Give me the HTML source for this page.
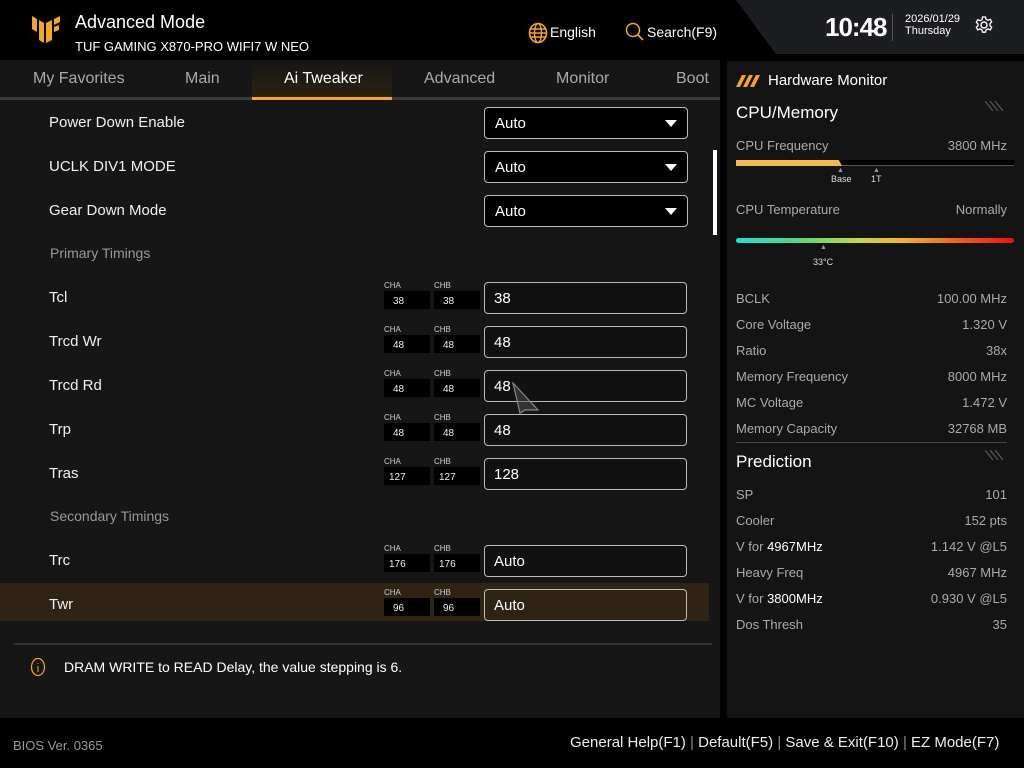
<!DOCTYPE html><html><head><meta charset="utf-8"><style>
*{margin:0;padding:0;box-sizing:border-box}
body{width:1024px;height:768px;background:#000;font-family:"Liberation Sans",sans-serif;color:#fff;position:relative;overflow:hidden}
.a{position:absolute;white-space:nowrap}
.lbl{font-size:15px;color:#f0f0f0}
.dd{position:absolute;left:484px;width:204px;height:32px;border:1px solid #bbb;border-radius:4px;background:#000;font-size:15px;padding:7px 0 0 10px}
.dd:after{content:"";position:absolute;right:10px;top:12px;border-left:6px solid transparent;border-right:6px solid transparent;border-top:7px solid #fff}
.in{position:absolute;left:484px;width:203px;height:32px;border:1px solid #bbb;border-radius:4px;background:#111;font-size:15px;padding:7px 0 0 9px}
.ch{position:absolute;font-size:8px;color:#ccc}
.cb{position:absolute;width:46px;height:18px;background:#000;font-size:10px;color:#eee;padding:5px 0 0 9px}
.hm{font-size:13px;color:#aaa}
.hv{position:absolute;right:17px;font-size:13px;color:#aaa}
</style></head><body>
<!-- top bar -->
<svg class="a" style="left:31px;top:14px" width="30" height="30" viewBox="0 0 30 30"><path d="M1 2l5 3v13l-5-3zM8 6l5 3v20l-5-3zM15 9l6-3v20l-6 3zM23 5l6-3v6l-6 3zM23 13l5-2v5l-5 2z" fill="#f5a623"/></svg>
<div class="a" style="left:75px;top:12px;font-size:18px">Advanced Mode</div>
<div class="a" style="left:75px;top:39px;font-size:13px">TUF GAMING X870-PRO WIFI7 W NEO</div>
<svg class="a" style="left:528px;top:22px" width="20" height="22" viewBox="0 0 20 22"><ellipse cx="10" cy="11" rx="8.5" ry="9.5" fill="none" stroke="#f5a623" stroke-width="1.6"/><ellipse cx="10" cy="11" rx="3.5" ry="9.5" fill="none" stroke="#f5a623" stroke-width="1.4"/><path d="M2 7h16M1.5 11h17M2 15h16" stroke="#f5a623" stroke-width="1.4"/></svg>
<div class="a" style="left:550px;top:24px;font-size:14px">English</div>
<svg class="a" style="left:625px;top:22px" width="20" height="20"><circle cx="8" cy="8" r="6.5" fill="none" stroke="#f5a623" stroke-width="1.5"/><path d="M13 13l5 5" stroke="#f5a623" stroke-width="1.6"/></svg>
<div class="a" style="left:647px;top:24px;font-size:14px">Search(F9)</div>
<svg class="a" style="left:736px;top:0" width="288" height="54"><path d="M0 0H288V54H40Z" fill="#1c1d21"/></svg>
<div class="a" style="left:825px;top:12px;font-size:26px;font-weight:bold;letter-spacing:-1px">10:48</div>
<div class="a" style="left:892px;top:14px;width:1px;height:27px;background:#555"></div>
<div class="a" style="left:905px;top:13px;font-size:11px;line-height:12px">2026/01/29<br>Thursday</div>
<svg class="a" style="left:974px;top:15px" width="20" height="20" viewBox="0 0 20 20"><circle cx="10" cy="10" r="3" fill="none" stroke="#fff" stroke-width="1.4"/><path d="M8.5 2h3l.5 2.3 2 1 2.2-1 1.5 2.6-1.7 1.6v2.2l1.7 1.6-1.5 2.6-2.2-1-2 1-.5 2.3h-3l-.5-2.3-2-1-2.2 1-1.5-2.6 1.7-1.6V8.9L2.3 7.3 3.8 4.7l2.2 1 2-1z" fill="none" stroke="#fff" stroke-width="1.3"/></svg>
<!-- main panel -->
<div class="a" style="left:0;top:60px;width:720px;height:658px;background:#161616"></div>
<div class="a" style="left:0;top:97px;width:720px;height:3px;background:#3a3a3a"></div>
<div class="a" style="left:252px;top:60px;width:140px;height:40px;background:linear-gradient(#161616,#2c2212)"></div>
<div class="a" style="left:252px;top:97px;width:140px;height:3px;background:#f5a623"></div>
<div class="a" style="left:33px;top:70px;font-size:16px;color:#aaa">My Favorites</div>
<div class="a" style="left:185px;top:70px;font-size:16px;color:#aaa">Main</div>
<div class="a" style="left:284px;top:70px;font-size:16px;color:#fff">Ai Tweaker</div>
<div class="a" style="left:424px;top:70px;font-size:16px;color:#aaa">Advanced</div>
<div class="a" style="left:556px;top:70px;font-size:16px;color:#aaa">Monitor</div>
<div class="a" style="left:676px;top:70px;font-size:16px;color:#aaa">Boot</div>
<div class="a" style="left:713px;top:150px;width:4px;height:85px;background:#fff"></div>
<div class="a" style="left:0;top:583px;width:709px;height:38px;background:#2f2313"></div>

<div class="a lbl" style="left:49px;top:114px">Power Down Enable</div><div class="dd" style="top:107px">Auto</div>
<div class="a lbl" style="left:49px;top:158px">UCLK DIV1 MODE</div><div class="dd" style="top:151px">Auto</div>
<div class="a lbl" style="left:49px;top:202px">Gear Down Mode</div><div class="dd" style="top:195px">Auto</div>
<div class="a" style="left:50px;top:245px;font-size:14px;color:#999">Primary Timings</div>
<div class="a" style="left:50px;top:508px;font-size:14px;color:#999">Secondary Timings</div>

<div class="a lbl" style="left:49px;top:289px">Tcl</div>
<div class="ch" style="left:384px;top:281px">CHA</div><div class="ch" style="left:434px;top:281px">CHB</div>
<div class="cb" style="left:384px;top:291px">38</div><div class="cb" style="left:434px;top:291px">38</div>
<div class="in" style="top:282px">38</div>

<div class="a lbl" style="left:49px;top:333px">Trcd Wr</div>
<div class="ch" style="left:384px;top:325px">CHA</div><div class="ch" style="left:434px;top:325px">CHB</div>
<div class="cb" style="left:384px;top:335px">48</div><div class="cb" style="left:434px;top:335px">48</div>
<div class="in" style="top:326px">48</div>

<div class="a lbl" style="left:49px;top:377px">Trcd Rd</div>
<div class="ch" style="left:384px;top:369px">CHA</div><div class="ch" style="left:434px;top:369px">CHB</div>
<div class="cb" style="left:384px;top:379px">48</div><div class="cb" style="left:434px;top:379px">48</div>
<div class="in" style="top:370px">48</div>

<div class="a lbl" style="left:49px;top:421px">Trp</div>
<div class="ch" style="left:384px;top:413px">CHA</div><div class="ch" style="left:434px;top:413px">CHB</div>
<div class="cb" style="left:384px;top:423px">48</div><div class="cb" style="left:434px;top:423px">48</div>
<div class="in" style="top:414px">48</div>

<div class="a lbl" style="left:49px;top:465px">Tras</div>
<div class="ch" style="left:384px;top:457px">CHA</div><div class="ch" style="left:434px;top:457px">CHB</div>
<div class="cb" style="left:384px;top:467px;padding-left:5px">127</div><div class="cb" style="left:434px;top:467px;padding-left:5px">127</div>
<div class="in" style="top:458px">128</div>

<div class="a lbl" style="left:49px;top:552px">Trc</div>
<div class="ch" style="left:384px;top:544px">CHA</div><div class="ch" style="left:434px;top:544px">CHB</div>
<div class="cb" style="left:384px;top:554px;padding-left:5px">176</div><div class="cb" style="left:434px;top:554px;padding-left:5px">176</div>
<div class="in" style="top:545px">Auto</div>

<div class="a lbl" style="left:49px;top:596px">Twr</div>
<div class="ch" style="left:384px;top:588px">CHA</div><div class="ch" style="left:434px;top:588px">CHB</div>
<div class="cb" style="left:384px;top:598px">96</div><div class="cb" style="left:434px;top:598px">96</div>
<div class="in" style="top:589px;background:#2f2313">Auto</div>

<svg class="a" style="left:512px;top:382px" width="28" height="32"><path d="M1 1L26 28H13L8 31Z" fill="rgba(80,80,80,.5)" stroke="#888" stroke-width="1.2"/></svg>

<div class="a" style="left:14px;top:643px;width:698px;height:2px;background:#333"></div>
<svg class="a" style="left:30px;top:657px" width="16" height="20"><ellipse cx="8" cy="10" rx="6.5" ry="8.5" fill="none" stroke="#f5a623" stroke-width="1.2"/><path d="M8 6v1M8 9v6" stroke="#f5a623" stroke-width="1"/></svg>
<div class="a" style="left:64px;top:659px;font-size:14px">DRAM WRITE to READ Delay, the value stepping is 6.</div>

<!-- right panel -->
<div class="a" style="left:727px;top:61px;width:297px;height:657px;background:#141414"></div>
<svg class="a" style="left:736px;top:75px" width="24" height="12"><path d="M0 12L6 0h4L4 12zM7 12L13 0h4L11 12zM14 12L20 0h4L18 12z" fill="#f5a623"/></svg>
<div class="a" style="left:768px;top:72px;font-size:15px">Hardware Monitor</div>
<div class="a" style="left:736px;top:103px;font-size:17px">CPU/Memory</div>
<svg class="a" style="left:985px;top:101px" width="20" height="10"><path d="M0 0l8 10M5 0l8 10M10 0l8 10" stroke="#555" stroke-width="1.3"/></svg>
<div class="a hm" style="left:736px;top:138px">CPU Frequency</div><div class="hv" style="top:138px">3800 MHz</div>
<div class="a" style="left:736px;top:160px;width:278px;height:6px;background:#000;border-bottom:1px solid #555"></div>
<div class="a" style="left:736px;top:160px;width:106px;height:6px;background:#f9b84a;clip-path:polygon(0 0,97% 0,100% 100%,0 100%)"></div>
<div class="a" style="left:837px;top:167px;font-size:7px;color:#999">▲</div>
<div class="a" style="left:873px;top:167px;font-size:7px;color:#999">▲</div>
<div class="a" style="left:831px;top:174px;font-size:9px;color:#ddd">Base</div>
<div class="a" style="left:871px;top:174px;font-size:9px;color:#ddd">1T</div>
<div class="a hm" style="left:736px;top:202px">CPU Temperature</div><div class="hv" style="top:202px">Normally</div>
<div class="a" style="left:736px;top:238px;width:278px;height:5px;border-radius:3px;background:linear-gradient(90deg,#19e6d0,#4fd58a 20%,#c8d83a 45%,#f5b51e 60%,#f06a14 78%,#f01010)"></div>
<div class="a" style="left:820px;top:244px;font-size:7px;color:#999">▲</div>
<div class="a" style="left:813px;top:257px;font-size:9px;color:#ddd">33°C</div>

<div class="a hm" style="left:736px;top:291px">BCLK</div><div class="hv" style="top:291px">100.00 MHz</div>
<div class="a hm" style="left:736px;top:317px">Core Voltage</div><div class="hv" style="top:317px">1.320 V</div>
<div class="a hm" style="left:736px;top:343px">Ratio</div><div class="hv" style="top:343px">38x</div>
<div class="a hm" style="left:736px;top:369px">Memory Frequency</div><div class="hv" style="top:369px">8000 MHz</div>
<div class="a hm" style="left:736px;top:395px">MC Voltage</div><div class="hv" style="top:395px">1.472 V</div>
<div class="a hm" style="left:736px;top:421px">Memory Capacity</div><div class="hv" style="top:421px">32768 MB</div>
<div class="a" style="left:736px;top:442px;width:271px;height:1px;background:#444"></div>
<div class="a" style="left:736px;top:452px;font-size:17px">Prediction</div>
<svg class="a" style="left:985px;top:450px" width="20" height="10"><path d="M0 0l8 10M5 0l8 10M10 0l8 10" stroke="#555" stroke-width="1.3"/></svg>
<div class="a hm" style="left:736px;top:487px">SP</div><div class="hv" style="top:487px">101</div>
<div class="a hm" style="left:736px;top:513px">Cooler</div><div class="hv" style="top:513px">152 pts</div>
<div class="a hm" style="left:736px;top:539px">V for <span style="color:#fff">4967MHz</span></div><div class="hv" style="top:539px">1.142 V @L5</div>
<div class="a hm" style="left:736px;top:565px">Heavy Freq</div><div class="hv" style="top:565px">4967 MHz</div>
<div class="a hm" style="left:736px;top:591px">V for <span style="color:#fff">3800MHz</span></div><div class="hv" style="top:591px">0.930 V @L5</div>
<div class="a hm" style="left:736px;top:617px">Dos Thresh</div><div class="hv" style="top:617px">35</div>

<!-- footer -->
<div class="a" style="left:13px;top:738px;font-size:13px;color:#999">BIOS Ver. 0365</div>
<div class="a" style="left:570px;top:734px;font-size:15px;color:#eee">General Help(F1) <span style="color:#888">|</span> Default(F5) <span style="color:#888">|</span> Save &amp; Exit(F10) <span style="color:#888">|</span> EZ Mode(F7)</div>
</body></html>
